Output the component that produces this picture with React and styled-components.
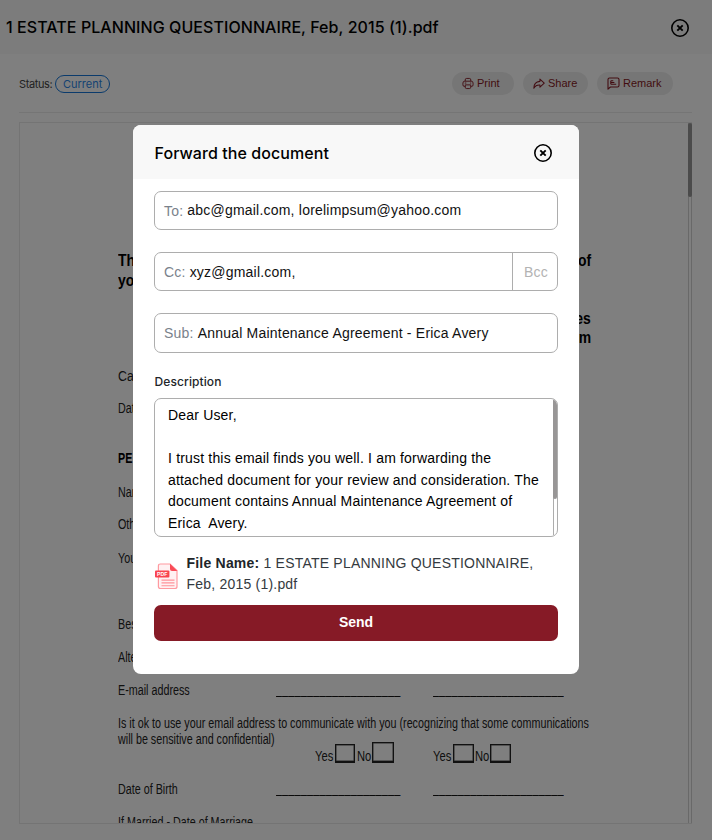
import React from "react";
import styled, { createGlobalStyle } from "styled-components";

const Global = createGlobalStyle`
  *, *::before, *::after { box-sizing: border-box; }
  html, body { margin: 0; height: 100%; overflow: hidden; }
  body { background: #fff; font-family: "Liberation Sans", Arial, sans-serif; color: #212529; }
  p { margin: 0; }
`;

const Page = styled.div`
  height: 840px;
  width: 712px;
  overflow: hidden;
`;

const PageHeader = styled.header`
  display: flex;
  align-items: center;
  justify-content: space-between;
  height: 54px;
  padding: 1px 23px 0 6px;
  background: #f8f8f8;
`;

const PageTitle = styled.h1`
  margin: 0;
  padding-bottom: 1px;
  font: 500 16px/24px Inter, sans-serif;
  letter-spacing: 0.07px;
  color: #000;
`;

const IconButton = styled.button`
  display: flex;
  padding: 0;
  border: 0;
  background: none;
  color: #000;
`;

const Toolbar = styled.div`
  display: flex;
  align-items: center;
  justify-content: space-between;
  height: 59px;
  margin: 0 20px 0 19px;
  padding-right: 19px;
  border-bottom: 1px solid #eaeaea;
`;

const Status = styled.div`
  display: flex;
  align-items: center;
  gap: 3px;
  padding-top: 2px;
  font: 400 11px/16px Inter, sans-serif;
  letter-spacing: -0.4px;
  color: #444;
`;

const StatusPill = styled.span`
  display: flex;
  align-items: center;
  justify-content: center;
  width: 55px;
  height: 18px;
  border: 1px solid #1677d9;
  border-radius: 9px;
  letter-spacing: 0;
  color: #2b86e6;
`;

const Actions = styled.div`
  display: flex;
  gap: 9px;
`;

const Action = styled.button`
  display: flex;
  align-items: center;
  gap: 3px;
  width: ${(p) => p.$width}px;
  height: 23px;
  padding: 0 0 0 10px;
  border: 0;
  border-radius: 12px;
  background: #ededed;
  color: #851923;
  font: 400 11px/14px "Liberation Sans", Arial, sans-serif;
`;

const Viewer = styled.main`
  display: flex;
  height: 702px;
  margin: 9px 20px 0 19px;
  border: 1px solid #e8e8e8;
  border-right: 0;
  overflow: hidden;
`;

const Sheet = styled.div`
  flex: 1;
  padding: 130px 0 0 98px;
  overflow: hidden;
`;

const ViewerTrack = styled.div`
  width: 4px;
  border: solid #d2d2d2;
  border-width: 0 1px;
`;

const ViewerThumb = styled.div`
  width: 4px;
  height: 74px;
  margin-left: -1px;
  border-radius: 2px;
  background: #969696;
`;

const Line = styled.div`
  display: flex;
  height: 16px;
  width: 473px;
  margin-top: ${(p) => p.$gap || 0}px;
  justify-content: space-between;
  align-items: center;
`;

const Copy = styled.span`
  white-space: pre;
  font-size: ${(p) => p.$size || 14}px;
  line-height: 16px;
  font-weight: ${(p) => (p.$bold ? 700 : 400)};
  color: ${(p) => (p.$bold ? "#000" : "#222")};
  transform: scaleX(${(p) => p.$narrow || 0.768});
  transform-origin: ${(p) => p.$origin || "left"} center;
`;

const Blanks = styled.div`
  display: flex;
  gap: 32px;
  margin-right: 27px;
`;

const Blank = styled.span`
  width: ${(p) => p.$width}px;
  height: 16px;
  overflow: hidden;
  font-size: 10px;
  line-height: 19px;
  letter-spacing: 0.68px;
  font-weight: 700;
  color: #111;
  -webkit-text-stroke: 0.5px #111;
`;

const Checks = styled.div`
  display: flex;
  align-items: flex-end;
  height: 22px;
  margin: -6px 0 0 197px;
  font-size: 14px;
`;

const CheckLabel = styled.span`
  width: ${(p) => p.$width}px;
  line-height: 14px;
  color: #222;
`;

const Squeeze = styled.span`
  display: inline-block;
  transform: scaleX(0.8);
  transform-origin: left center;
`;

const Box = styled.span`
  width: ${(p) => p.$width || 20}px;
  height: ${(p) => p.$height || 19}px;
  margin-right: ${(p) => p.$after || 2}px;
  border: 1.5px solid #222;
  border-bottom-width: 2px;
  box-shadow: inset 0 0 0 0.5px #555;
`;

const Backdrop = styled.div`
  position: fixed;
  inset: 0;
  display: flex;
  align-items: flex-start;
  justify-content: center;
  padding-top: 125px;
  background: rgba(0, 0, 0, 0.5);
`;

const Modal = styled.section`
  width: 446px;
  height: 549px;
  border-radius: 8px;
  background: #fff;
  overflow: hidden;
`;

const ModalHeader = styled.div`
  display: flex;
  align-items: center;
  justify-content: space-between;
  height: 54px;
  padding: 2px 27px 0 21.5px;
  background: #f8f8f8;
`;

const Form = styled.div`
  display: flex;
  flex-direction: column;
  padding: 12px 21px 0;
`;

const Field = styled.div`
  display: flex;
  align-items: center;
  height: ${(p) => p.$height || 39}px;
  margin-bottom: 22px;
  padding-left: 9px;
  border: 1px solid #adadad;
  border-radius: 7px;
  font-size: 14px;
  letter-spacing: 0.21px;
`;

const Prefix = styled.span`
  margin-right: 4px;
  color: #7a828b;
`;

const Value = styled.span`
  flex: 1;
  padding-bottom: ${(p) => p.$lift || 0}px;
  color: #111;
`;

const Bcc = styled.span`
  display: flex;
  align-items: center;
  align-self: stretch;
  width: 45px;
  padding-left: 11px;
  border-left: 1px solid #adadad;
  color: #b3b3b3;
`;

const Label = styled.label`
  margin-top: -2px;
  padding-left: 0.5px;
  font: 500 12px/18px Inter, sans-serif;
  letter-spacing: 0.1px;
  color: #212529;
`;

const Message = styled.div`
  display: flex;
  justify-content: space-between;
  height: 139px;
  margin-top: 7px;
  border: 1px solid #adadad;
  border-radius: 7px;
  overflow: hidden;
`;

const MessageText = styled.p`
  padding: 6px 0 0 13px;
  white-space: pre;
  font-size: 14px;
  line-height: 21.6px;
  letter-spacing: 0.18px;
  color: #000;
`;

const MessageTrack = styled.div`
  flex: none;
  width: 4px;
  border-left: 1px solid #adadad;
`;

const MessageThumb = styled.div`
  width: 4px;
  height: 100px;
  margin-left: -1px;
  border-radius: 2px;
  background: #989696;
`;

const Attachment = styled.div`
  display: flex;
  gap: 7.5px;
  margin-top: 16px;
  padding-left: 1px;
`;

const AttachmentName = styled.p`
  white-space: pre;
  font-size: 14px;
  line-height: 21px;
  letter-spacing: 0.21px;
  color: #343a40;
  b { color: #212529; }
`;

const Send = styled.button`
  height: 36px;
  margin-top: 10px;
  padding: 0 0 2px;
  border: 0;
  border-radius: 7px;
  background: #861a26;
  color: #fff;
  font: 700 14px/20px "Liberation Sans", Arial, sans-serif;
`;

const PdfIcon = styled.svg`
  flex: none;
  margin-top: 10px;
`;

const Close = () => (
  <IconButton aria-label="Close">
    <svg width="18" height="18" viewBox="0 0 18 18" fill="none" stroke="currentColor">
      <circle cx="9" cy="9" r="8.2" strokeWidth="1.6" />
      <path d="M6.3 6.3 11.7 11.7M11.7 6.3 6.3 11.7" strokeWidth="1.9" />
    </svg>
  </IconButton>
);

const PrintIcon = () => (
  <svg width="12" height="13" viewBox="0 0 13 13" fill="none" stroke="currentColor" strokeWidth="1">
    <path d="M3.5 4V2.6Q3.5 1 5 1h3q1.5 0 1.5 1.6V4M3.5 9.7H2.7Q1 9.7 1 8V6q0-2 2-2h7q2 0 2 2v2q0 1.7-1.7 1.7h-.8" />
    <path d="M3.5 8h6v2.5q0 1.5-1.5 1.5H5q-1.5 0-1.5-1.5ZM3 6h1.7M8.8 6H10" />
  </svg>
);

const ShareIcon = () => (
  <svg width="12" height="13" viewBox="0 0 13 13" fill="none" stroke="currentColor" strokeWidth="1.1" strokeLinejoin="round">
    <path d="M7.5 1.7 12.2 6.1 7.5 10.5V8.2C4.3 8 2.4 9 .9 11.6.9 7.4 3.3 4.6 7.5 4.2Z" />
  </svg>
);

const RemarkIcon = () => (
  <svg width="13" height="13" viewBox="0 0 13 13" fill="none" stroke="currentColor" strokeWidth="1.1" strokeLinejoin="round">
    <path d="M1 12.2V2.5Q1 1 2.5 1h8Q12 1 12 2.5v6Q12 10 10.5 10H3.4ZM3.8 3.8h2.5M3.8 3.8v3.4M3.8 5.5h3.6M3.8 7.2h5.4" />
  </svg>
);

const Pdf = () => (
  <PdfIcon width="24" height="27" viewBox="0 0 24 27">
    <path d="M5.4 1H15l7 6.5v16q0 2-2 2H5.4q-2 0-2-2V3q0-2 2-2Z" fill="#fff1f2" stroke="#ff9aa0" strokeWidth="1.2" />
    <path d="M15 .7 22.4 8H17q-2 0-2-2Z" fill="#f94b57" />
    <path d="M6.5 17.1h13M6.5 19.9h13M6.5 22.7h13" stroke="#ff9299" strokeWidth="1.1" />
    <rect x="0" y="7.4" width="14.4" height="7.2" rx="1" fill="#f9434f" />
    <text x="7.2" y="13" textAnchor="middle" fontFamily="Liberation Sans" fontWeight="700" fontSize="5.2" fill="#fff">PDF</text>
  </PdfIcon>
);

const headLines = [
  { gap: 0, left: "Th", right: "of", size: 16 },
  { gap: 4, left: "yo", size: 16 },
  { gap: 22, right: "es", size: 16 },
  { gap: 3, right: "m", size: 16 },
];

const fieldLines = [
  { gap: 22, left: "Ca", narrow: 0.88 },
  { gap: 16, left: "Dat" },
  { gap: 34, left: "PE", bold: true },
  { gap: 18, left: "Nam" },
  { gap: 16, left: "Oth" },
  { gap: 18, left: "You" },
  { gap: 50, left: "Bes" },
  { gap: 17, left: "Alte" },
];

const BlankPair = () => (
  <Blanks>
    <Blank $width={125}>{"_".repeat(20)}</Blank>
    <Blank $width={131}>{"_".repeat(21)}</Blank>
  </Blanks>
);

const Document = () => (
  <Sheet>
    {headLines.map((l, i) => (
      <Line key={i} $gap={l.gap}>
        <Copy $bold $size={l.size} $narrow={0.87}>{l.left}</Copy>
        <Copy $bold $size={l.size} $narrow={0.87} $origin="right">{l.right}</Copy>
      </Line>
    ))}
    {fieldLines.map((l) => (
      <Line key={l.left} $gap={l.gap}>
        <Copy $bold={l.bold} $narrow={l.narrow}>{l.left}</Copy>
      </Line>
    ))}
    <Line $gap={17}><Copy>E-mail address</Copy><BlankPair /></Line>
    <Line $gap={17}>
      <Copy>Is it ok to use your email address to communicate with you (recognizing that some communications</Copy>
    </Line>
    <Line><Copy>will be sensitive and confidential)</Copy></Line>
    <Checks>
      <CheckLabel $width={20}><Squeeze>Yes</Squeeze></CheckLabel><Box />
      <CheckLabel $width={15}><Squeeze>No</Squeeze></CheckLabel><Box $width={22} $height={21} $after={39} />
      <CheckLabel $width={20}><Squeeze>Yes</Squeeze></CheckLabel><Box $width={21} $after={1} />
      <CheckLabel $width={15}><Squeeze>No</Squeeze></CheckLabel><Box $width={21} />
    </Checks>
    <Line $gap={18}><Copy>Date of Birth</Copy><BlankPair /></Line>
    <Line $gap={17}><Copy>If Married - Date of Marriage</Copy></Line>
  </Sheet>
);

const message = `Dear User,

I trust this email finds you well. I am forwarding the
attached document for your review and consideration. The
document contains Annual Maintenance Agreement of
Erica  Avery.`;

export default function App() {
  return (
    <>
      <Global />
      <Page>
        <PageHeader>
          <PageTitle>1 ESTATE PLANNING QUESTIONNAIRE, Feb, 2015 (1).pdf</PageTitle>
          <Close />
        </PageHeader>
        <Toolbar>
          <Status>Status: <StatusPill>Current</StatusPill></Status>
          <Actions>
            <Action $width={62}><PrintIcon />Print</Action>
            <Action $width={65}><ShareIcon />Share</Action>
            <Action $width={76}><RemarkIcon />Remark</Action>
          </Actions>
        </Toolbar>
        <Viewer>
          <Document />
          <ViewerTrack><ViewerThumb /></ViewerTrack>
        </Viewer>
      </Page>
      <Backdrop>
        <Modal role="dialog" aria-label="Forward the document">
          <ModalHeader>
            <PageTitle as="h2">Forward the document</PageTitle>
            <Close />
          </ModalHeader>
          <Form>
            <Field><Prefix>To:</Prefix><Value $lift={1}>abc@gmail.com, lorelimpsum@yahoo.com</Value></Field>
            <Field><Prefix>Cc:</Prefix><Value>xyz@gmail.com,</Value><Bcc>Bcc</Bcc></Field>
            <Field $height={40}><Prefix>Sub:</Prefix><Value>Annual Maintenance Agreement - Erica Avery</Value></Field>
            <Label>Description</Label>
            <Message>
              <MessageText>{message}</MessageText>
              <MessageTrack><MessageThumb /></MessageTrack>
            </Message>
            <Attachment>
              <Pdf />
              <AttachmentName><b>File Name:</b>{" 1 ESTATE PLANNING QUESTIONNAIRE,\nFeb, 2015 (1).pdf"}</AttachmentName>
            </Attachment>
            <Send>Send</Send>
          </Form>
        </Modal>
      </Backdrop>
    </>
  );
}
